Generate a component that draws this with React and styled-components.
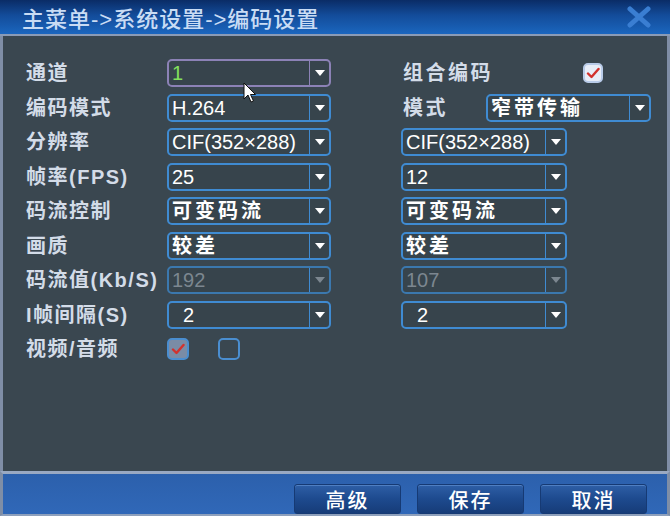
import React from "react";
import styled, { createGlobalStyle } from "styled-components";

const GlobalStyle = createGlobalStyle`
  html, body {
    margin: 0;
    padding: 0;
    background: #3a4750;
  }
  body {
    font-family: "Liberation Sans", "Noto Sans CJK SC", sans-serif;
  }
`;

const Window = styled.div`
  position: relative;
  width: 670px;
  height: 516px;
  display: flex;
  flex-direction: column;
  overflow: hidden;
`;

const TitleBar = styled.div`
  box-sizing: border-box;
  height: 36px;
  flex: none;
  display: flex;
  align-items: center;
  justify-content: space-between;
  padding: 0 18px 0 22px;
  background: linear-gradient(to bottom, #0a2c66 0%, #134c9a 45%, #1b66be 100%);
  border-bottom: 2px solid #8a9bb6;
`;

const Title = styled.span`
  color: #c9dcf4;
  font-size: 22px;
  letter-spacing: 1px;
  font-weight: 500;
`;

const Body = styled.div`
  flex: 1;
  background: #3a4750;
  border-left: 3px solid #7f8ea6;
  border-right: 3px solid #7f8ea6;
  padding: 23px 0 0 23px;
`;

const Form = styled.div`
  display: flex;
  flex-direction: column;
  gap: 6.5px;
`;

const Row = styled.div`
  display: grid;
  grid-template-columns: 141px 164px 70px 1fr;
  grid-template-rows: 28px;
  height: 28px;
  align-items: center;
`;

const Label = styled.span`
  color: #d3dce8;
  font-size: 20px;
  line-height: 24px;
  font-weight: 700;
  letter-spacing: 1.5px;
  white-space: nowrap;
`;

const RightCell = styled.div`
  display: flex;
  align-items: center;
  height: 28px;
`;

const RightLabel = styled(Label)`
  box-sizing: border-box;
  width: ${(p) => p.$w}px;
  padding-left: 2px;
  letter-spacing: 2.5px;
`;

const SelectBox = styled.div`
  box-sizing: border-box;
  width: ${(p) => p.$w}px;
  height: 28px;
  display: flex;
  border: 2px solid
    ${(p) => (p.$focus ? "#8c82b6" : p.$disabled ? "#3b78ae" : "#3f8bd2")};
  border-radius: 5px;
  background: #37444c;
`;

const SelectText = styled.span`
  flex: 1;
  padding-left: ${(p) => (p.$indent ? 14 : 3)}px;
  line-height: 24px;
  font-size: 20px;
  font-weight: ${(p) => (p.$cjk ? 700 : 400)};
  letter-spacing: ${(p) => (p.$cjk ? "3px" : "0")};
  color: ${(p) => (p.$green ? "#82e05c" : p.$disabled ? "#7c8790" : "#ffffff")};
  white-space: nowrap;
  overflow: hidden;
`;

const ArrowPart = styled.span`
  width: 19px;
  flex: none;
  border-left: 1px solid ${(p) => (p.$focus ? "#8c82b6" : "#3f8bd2")};
  display: flex;
  align-items: center;
  justify-content: center;
`;

const Arrow = styled.span`
  width: 0;
  height: 0;
  border-left: 5px solid transparent;
  border-right: 5px solid transparent;
  border-top: 6px solid ${(p) => (p.$disabled ? "#7c8790" : "#ffffff")};
`;

const CheckBox = styled.span`
  box-sizing: border-box;
  width: ${(p) => p.$size}px;
  height: ${(p) => p.$size}px;
  border-radius: 5px;
  border: 2px solid ${(p) => (p.$light ? "#b8cbe8" : "#4a8ed0")};
  background: ${(p) => (p.$light ? "#e8eef8" : p.$checked ? "#7a8ca6" : "transparent")};
  display: flex;
  align-items: center;
  justify-content: center;
  margin-right: ${(p) => p.$mr || 0}px;
`;

const CheckGroup = styled.div`
  display: flex;
  align-items: center;
`;

const Footer = styled.div`
  box-sizing: border-box;
  height: 45px;
  flex: none;
  display: flex;
  justify-content: flex-end;
  align-items: flex-end;
  gap: 16px;
  padding-right: 20px;
  background: linear-gradient(to bottom, #2c60ac, #3068b8);
  border-top: 3px solid #9aa9c2;
  border-bottom: 2px solid #8ea0bc;
  border-left: 3px solid #7f8ea6;
  border-right: 3px solid #7f8ea6;
`;

const Button = styled.button`
  box-sizing: border-box;
  width: 107px;
  height: 30px;
  border: 1px solid #163a74;
  border-radius: 3px;
  background: linear-gradient(to bottom, #2e5fa6 0%, #1d4a8e 50%, #163c78 100%);
  box-shadow: inset 0 1px 0 #4f7fc2;
  color: #ffffff;
  font-family: "Liberation Sans", "Noto Sans CJK SC", sans-serif;
  font-size: 20px;
  font-weight: 500;
  letter-spacing: 2px;
  padding: 0;
`;

const Cursor = styled.svg`
  position: absolute;
  left: 243px;
  top: 82px;
`;

const Check = ({ color = "#d2322e" }) => (
  <svg width="14" height="12" viewBox="0 0 14 12">
    <path d="M2 6.5 L5.5 10 L12.5 2" fill="none" stroke={color} strokeWidth="2.4" strokeLinecap="round" strokeLinejoin="round" />
  </svg>
);

const Select = ({ w = 164, value, cjk, green, focus, disabled, indent }) => (
  <SelectBox $w={w} $focus={focus} $disabled={disabled}>
    <SelectText $cjk={cjk} $green={green} $disabled={disabled} $indent={indent}>
      {value}
    </SelectText>
    <ArrowPart $focus={focus}>
      <Arrow $disabled={disabled} />
    </ArrowPart>
  </SelectBox>
);

const rows = [
  { label: "码流控制", left: "可变码流", right: "可变码流", cjk: true },
  { label: "画质", left: "较差", right: "较差", cjk: true },
  { label: "码流值(Kb/S)", left: "192", right: "107", disabled: true },
  { label: "I帧间隔(S)", left: "2", right: "2", indent: true },
];

export default function App() {
  return (
    <Window>
      <GlobalStyle />
      <TitleBar>
        <Title>主菜单-&gt;系统设置-&gt;编码设置</Title>
        <svg width="26" height="22" viewBox="0 0 26 22">
          <path d="M4 3 L22 19 M22 3 L4 19" stroke="#3a7ed2" strokeWidth="5" strokeLinecap="round" />
        </svg>
      </TitleBar>
      <Body>
        <Form>
          <Row>
            <Label>通道</Label>
            <Select value="1" green focus />
            <span />
            <RightCell>
              <RightLabel $w={182}>组合编码</RightLabel>
              <CheckBox $size={20} $light>
                <Check />
              </CheckBox>
            </RightCell>
          </Row>
          <Row>
            <Label>编码模式</Label>
            <Select value="H.264" />
            <span />
            <RightCell>
              <RightLabel $w={85}>模式</RightLabel>
              <Select w={165} value="窄带传输" cjk />
            </RightCell>
          </Row>
          <Row>
            <Label>分辨率</Label>
            <Select value="CIF(352×288)" />
            <span />
            <Select w={166} value="CIF(352×288)" />
          </Row>
          <Row>
            <Label>帧率(FPS)</Label>
            <Select value="25" />
            <span />
            <Select w={166} value="12" />
          </Row>
          {rows.map((r) => (
            <Row key={r.label}>
              <Label>{r.label}</Label>
              <Select value={r.left} cjk={r.cjk} disabled={r.disabled} indent={r.indent} />
              <span />
              <Select w={166} value={r.right} cjk={r.cjk} disabled={r.disabled} indent={r.indent} />
            </Row>
          ))}
          <Row>
            <Label>视频/音频</Label>
            <CheckGroup>
              <CheckBox $size={22} $checked $mr={29}>
                <Check />
              </CheckBox>
              <CheckBox $size={22} />
            </CheckGroup>
          </Row>
        </Form>
      </Body>
      <Footer>
        <Button>高级</Button>
        <Button>保存</Button>
        <Button>取消</Button>
      </Footer>
      <Cursor width="14" height="22" viewBox="0 0 14 22">
        <path d="M1 1 L1 17 L5 13 L8 20 L10.5 19 L7.5 12.5 L12.5 12.5 Z" fill="#ffffff" stroke="#111" strokeWidth="1" strokeLinejoin="round" />
      </Cursor>
    </Window>
  );
}
